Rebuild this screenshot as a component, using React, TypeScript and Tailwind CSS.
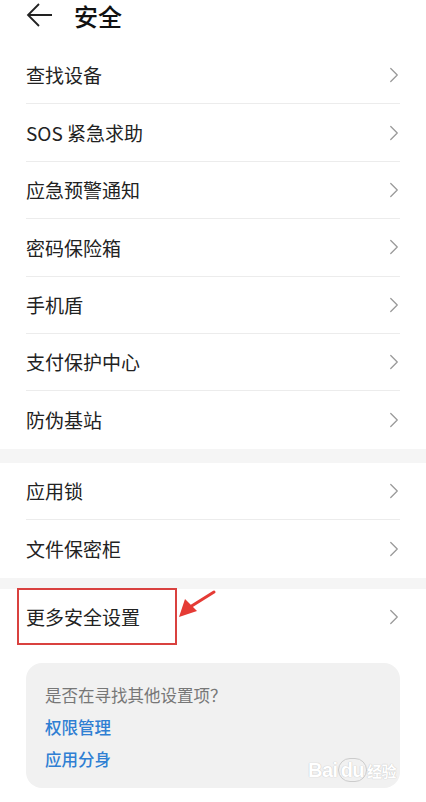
import { ChevronRight } from "lucide-react";

const GROUP_ONE = ["查找设备", "SOS 紧急求助", "应急预警通知", "密码保险箱", "手机盾", "支付保护中心", "防伪基站"];
const GROUP_TWO = ["应用锁", "文件保密柜"];

const FONT = { fontFamily: '"Noto Sans CJK SC", "Noto Sans", sans-serif' };

function Row({ label, last }: { label: string; last?: boolean }) {
  return (
    <div className="px-[26px]">
      <div
        className={`flex h-[57.4px] items-center justify-between ${
          last ? "" : "border-b border-[#ececec]"
        }`}
      >
        <span className="mt-[1px] text-[19px] text-[#222]">{label}</span>
        <ChevronRight size={26} strokeWidth={1.2} className="mr-[-7px] text-[#9a9a9a]" />
      </div>
    </div>
  );
}

export default function App() {
  return (
    <div className="relative h-[802px] w-[426px] overflow-hidden bg-white" style={FONT}>
      {/* en-tête */}
      <div className="flex h-[47px] items-start gap-[20px] px-[26px] pt-[1px]">
        <svg width="28" height="28" viewBox="0 0 28 28">
          <path d="M26 14H3M13 3L2 14l11 11" fill="none" stroke="#222" strokeWidth="1.8" />
        </svg>
        <h1 className="text-[24px] font-medium leading-[30px] text-[#111]">安全</h1>
      </div>

      {GROUP_ONE.map((l, i) => (
        <Row key={l} label={l} last={i === GROUP_ONE.length - 1} />
      ))}

      <div className="h-[14px] bg-[#f5f5f5]" />

      {GROUP_TWO.map((l, i) => (
        <Row key={l} label={l} last={i === GROUP_TWO.length - 1} />
      ))}

      <div className="h-[11px] bg-[#f5f5f5]" />

      <Row label="更多安全设置" last />

      <div className="mx-[26px] mt-[17px] rounded-[16px] bg-[#f1f1f1] px-[19px] pb-[13px] pt-[16px]">
        <p className="text-[16.5px] leading-[32px] text-[#777]">是否在寻找其他设置项？</p>
        <p className="text-[16.5px] font-medium leading-[32px] text-[#2f7fd3]">权限管理</p>
        <p className="text-[16.5px] font-medium leading-[32px] text-[#2f7fd3]">应用分身</p>
      </div>

      {/* annotation */}
      <div className="absolute left-[17px] top-[588px] h-[57px] w-[160px] border-[2.5px] border-[#d9413f]" />
      <svg className="absolute left-[176px] top-[588px]" width="42" height="34" viewBox="0 0 42 34">
        <path d="M38 4L14 19" stroke="#e53b35" strokeWidth="3" strokeLinecap="round" />
        <path d="M3 29L9 11L21 23Z" fill="#e53b35" />
      </svg>

      {/* filigrane */}
      <div
        className="absolute left-[308px] top-[755px] text-[20px] font-bold tracking-tight text-white"
        style={{ fontFamily: '"Liberation Sans", sans-serif', textShadow: "0 0 1px #c8c8c8, 0 0 1px #c8c8c8" }}
      >
        Bai<span className="rounded-full border border-[#ccc] px-[2px]">du</span>
        <span className="text-[15px]" style={FONT}>经验</span>
      </div>
    </div>
  );
}
